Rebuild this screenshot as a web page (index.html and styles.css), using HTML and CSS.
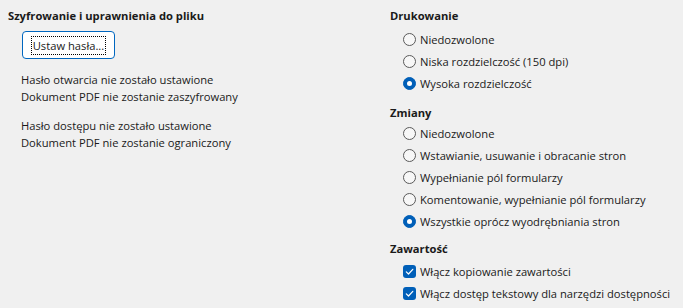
FILE: index.html
```html
<!DOCTYPE html>
<html lang="pl">
<head>
  <meta charset="UTF-8" />
  <title>Zabezpieczenia PDF</title>
  <link rel="stylesheet" href="styles.css">
</head>
<body>
  <div class="dialog">
    <section class="col-left">
      <h2 class="group-title">Szyfrowanie i uprawnienia do pliku</h2>
      <button class="pass-btn"><span class="focus">Ustaw hasła...</span></button>
      <p class="info">Hasło otwarcia nie zostało ustawione<br>Dokument PDF nie zostanie zaszyfrowany</p>
      <p class="info">Hasło dostępu nie zostało ustawione<br>Dokument PDF nie zostanie ograniczony</p>
    </section>

    <section class="col-right">
      <div class="group print">
        <h2 class="group-title">Drukowanie</h2>
        <label class="opt"><span class="radio"></span>Niedozwolone</label>
        <label class="opt"><span class="radio"></span>Niska rozdzielczość (150 dpi)</label>
        <label class="opt"><span class="radio on"></span>Wysoka rozdzielczość</label>
      </div>

      <div class="group changes">
        <h2 class="group-title">Zmiany</h2>
        <label class="opt"><span class="radio"></span>Niedozwolone</label>
        <label class="opt"><span class="radio"></span>Wstawianie, usuwanie i obracanie stron</label>
        <label class="opt"><span class="radio"></span>Wypełnianie pól formularzy</label>
        <label class="opt"><span class="radio"></span>Komentowanie, wypełnianie pól formularzy</label>
        <label class="opt"><span class="radio on"></span>Wszystkie oprócz wyodrębniania stron</label>
      </div>

      <div class="group content">
        <h2 class="group-title">Zawartość</h2>
        <label class="opt"><span class="check"><svg viewBox="0 0 13 13" width="13" height="13"><path d="M3.3 6.8 L5.5 9 L9.8 4.3" fill="none" stroke="#fff" stroke-width="1.2" stroke-linecap="round" stroke-linejoin="round"/></svg></span>Włącz kopiowanie zawartości</label>
        <label class="opt"><span class="check"><svg viewBox="0 0 13 13" width="13" height="13"><path d="M3.3 6.8 L5.5 9 L9.8 4.3" fill="none" stroke="#fff" stroke-width="1.2" stroke-linecap="round" stroke-linejoin="round"/></svg></span>Włącz dostęp tekstowy dla narzędzi dostępności</label>
      </div>
    </section>
  </div>
</body>
</html>
```

FILE: styles.css
```css
html, body {
  margin: 0;
  height: 100%;
}

body {
  background: #f0f0f0;
  color: #1a1a1a;
  font-family: "Open Sans", "Noto Sans", sans-serif;
  font-size: 11.2px;
  line-height: 17px;
}

.dialog {
  display: grid;
  grid-template-columns: 382px 1fr;
  padding: 7px 0 0 8px;
}

.group-title {
  margin: 0;
  font-size: 11.2px;
  font-weight: 700;
  line-height: 17px;
}

.pass-btn {
  display: flex;
  align-items: center;
  justify-content: center;
  margin: 7px 0 0 14px;
  width: 93px;
  height: 28px;
  padding: 0;
  background: #fff;
  border: 1px solid #0067c0;
  border-radius: 4px;
  font: inherit;
  color: #1a1a1a;
}

.pass-btn .focus {
  border: 1px dotted #000;
  padding: 0 1px;
  line-height: 17px;
}

.info {
  margin: 12px 0 0 13px;
}

.group {
  display: flex;
  flex-direction: column;
}

.print .group-title {
  margin-bottom: 4px;
}

.changes {
  margin-top: 10px;
}

.changes .group-title {
  margin-bottom: 1px;
}

.content {
  margin-top: 8px;
}

.content .group-title {
  margin-bottom: 3px;
}

.opt {
  display: flex;
  align-items: center;
  gap: 4px;
  height: 22px;
  padding-left: 13px;
  white-space: nowrap;
}

.radio {
  box-sizing: border-box;
  width: 13px;
  height: 13px;
  border: 1px solid #5a5a5a;
  border-radius: 50%;
  background: #f7f7f7;
  flex-shrink: 0;
}

.radio.on {
  background: #005fb8;
  border-color: #005fb8;
  display: flex;
  align-items: center;
  justify-content: center;
}

.radio.on::after {
  content: "";
  width: 5px;
  height: 5px;
  border-radius: 50%;
  background: #fff;
}

.check {
  width: 13px;
  height: 13px;
  border-radius: 3px;
  background: #005fb8;
  flex-shrink: 0;
  display: flex;
}
```
